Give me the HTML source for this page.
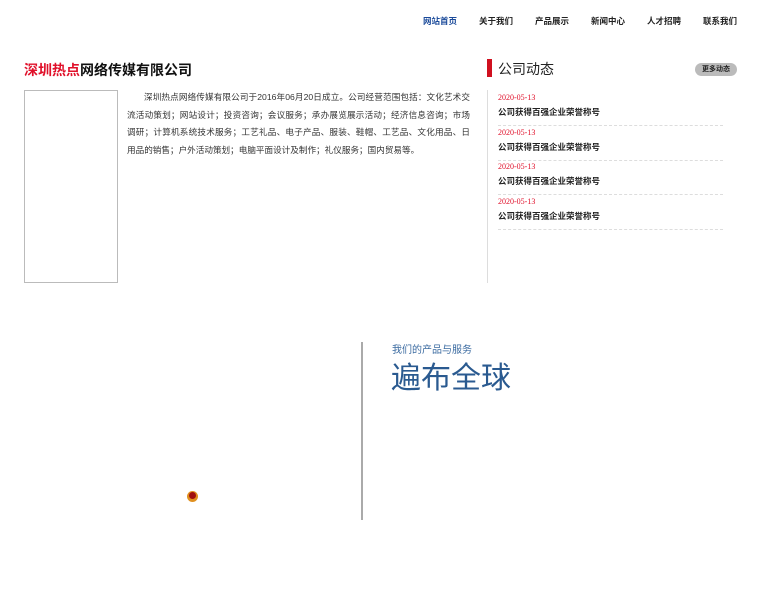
<!DOCTYPE html>
<html><head><meta charset="utf-8"><style>
*{margin:0;padding:0;box-sizing:border-box}
body{width:760px;height:600px;background:#fff;font-family:"Liberation Serif","Noto Serif CJK SC","Noto Sans CJK SC",serif;color:#222;position:relative;overflow:hidden}
.a{position:absolute}
.nav span{position:absolute;top:15px;font-size:8.5px;font-weight:bold;color:#222;font-family:"Liberation Sans","Noto Sans CJK SC",sans-serif}
.t{font-family:"Liberation Sans","Noto Sans CJK SC",sans-serif}
.item{position:absolute;left:498px;width:225px;border-bottom:1px dashed #ddd;height:35px}
.item .d{position:absolute;top:2px;font-size:8px;color:#e0102a}
.item .n{position:absolute;top:15px;font-size:8.5px;font-weight:bold;color:#222;font-family:"Liberation Sans","Noto Sans CJK SC",sans-serif}
</style></head><body>
<div class="nav">
<span style="left:423px;color:#1a4a9a">网站首页</span>
<span style="left:479px">关于我们</span>
<span style="left:535px">产品展示</span>
<span style="left:591px">新闻中心</span>
<span style="left:647px">人才招聘</span>
<span style="left:703px">联系我们</span>
</div>
<div class="a t" style="left:24px;top:60px;font-size:14px;font-weight:bold;letter-spacing:0"><span style="color:#e0102a">深圳热点</span><span style="color:#111">网络传媒有限公司</span></div>
<div class="a" style="left:24px;top:90px;width:94px;height:193px;border:1px solid #bbb"></div>
<div class="a t" style="left:127px;top:89px;width:343px;font-size:8.6px;line-height:17.5px;color:#333;text-indent:17px;text-align:justify">深圳热点网络传媒有限公司于2016年06月20日成立。公司经营范围包括：文化艺术交流活动策划；网站设计；投资咨询；会议服务；承办展览展示活动；经济信息咨询；市场调研；计算机系统技术服务；工艺礼品、电子产品、服装、鞋帽、工艺品、文化用品、日用品的销售；户外活动策划；电脑平面设计及制作；礼仪服务；国内贸易等。</div>
<div class="a" style="left:487px;top:59px;width:5px;height:18px;background:#d0101f"></div>
<div class="a t" style="left:498px;top:59px;font-size:14px;color:#222">公司动态</div>
<div class="a t" style="left:695px;top:63px;width:42px;height:13px;border-radius:7px;background:#bbb;font-size:7px;font-weight:bold;text-align:center;line-height:13px;color:#222">更多动态</div>
<div class="a" style="left:487px;top:90px;width:1px;height:193px;background:#ddd"></div>
<div class="item" style="top:91px"><div class="d">2020-05-13</div><div class="n">公司获得百强企业荣誉称号</div></div>
<div class="item" style="top:126px"><div class="d">2020-05-13</div><div class="n">公司获得百强企业荣誉称号</div></div>
<div class="item" style="top:160px"><div class="d">2020-05-13</div><div class="n">公司获得百强企业荣誉称号</div></div>
<div class="item" style="top:195px"><div class="d">2020-05-13</div><div class="n">公司获得百强企业荣誉称号</div></div>
<div class="a" style="left:361px;top:342px;width:2px;height:178px;background:#aaa"></div>
<div class="a t" style="left:392px;top:341px;font-size:10px;color:#3a6aa0">我们的产品与服务</div>
<div class="a t" style="left:391px;top:353px;font-size:30px;color:#2a5a90;letter-spacing:0">遍布全球</div>
<div class="a" style="left:187px;top:491px;width:11px;height:11px;border-radius:50%;background:#e09020"></div>
<div class="a" style="left:189px;top:492px;width:7px;height:7px;border-radius:50%;background:#a01010"></div>
</body></html>
